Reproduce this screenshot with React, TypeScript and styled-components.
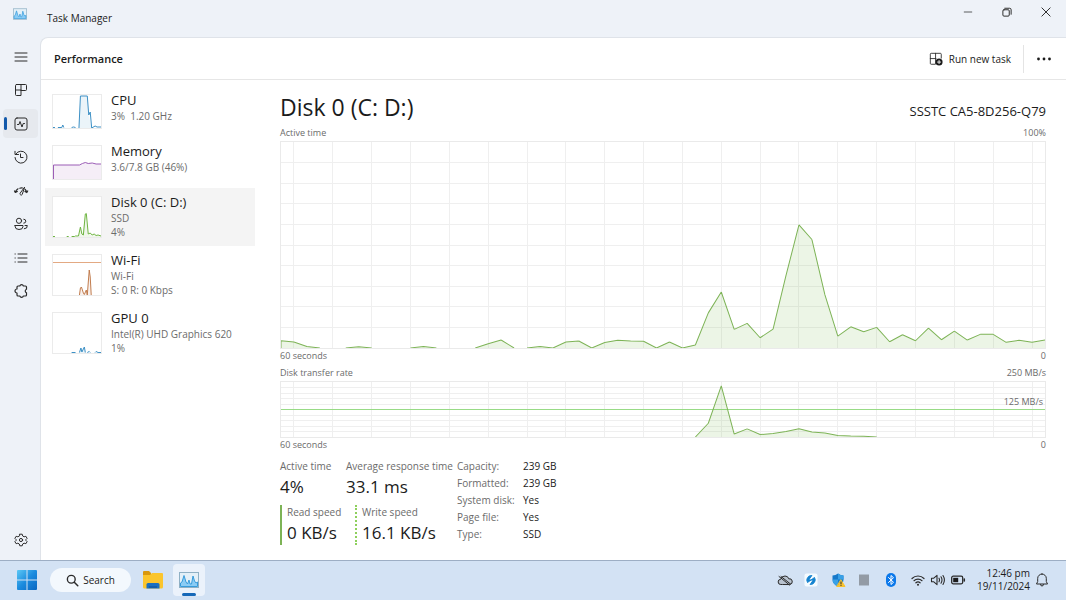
import React from "react";
import styled, { createGlobalStyle } from "styled-components";

const GlobalStyle = createGlobalStyle`
  *, *::before, *::after { box-sizing: border-box; }
  body { margin: 0; background: #eef2f8; color: #1b1b1b; font-family: "Open Sans", "Noto Sans", sans-serif; font-size: 10px; }
  button { font: inherit; color: inherit; border: 0; background: none; padding: 0; display: flex; align-items: center; justify-content: center; }
  svg { display: block; flex: none; }
`;

const Desktop = styled.div`
  min-height: 100vh;
  display: flex;
  flex-direction: column;
`;

const TitleBar = styled.header`
  height: 37px;
  padding-right: 1px;
  display: flex;
  align-items: flex-start;
`;

const AppIcon = styled.div`
  width: 47px;
  padding: 8px 0 0 13px;
`;

const AppName = styled.span`
  flex: 1;
  padding-top: 11px;
  line-height: 14px;
`;

const WindowButton = styled.button`
  width: 39px;
  height: 24px;
`;

const Body = styled.div`
  flex: 1;
  display: flex;
`;

const Rail = styled.nav`
  width: 40px;
  padding: 5px 3px 6px;
  display: flex;
  flex-direction: column;
  justify-content: space-between;
`;

const RailGroup = styled.div`
  height: 264px;
  display: flex;
  flex-direction: column;
  justify-content: space-between;
`;

const RailButton = styled.button<{ $active?: boolean }>`
  position: relative;
  width: 35px;
  height: 29px;
  border-radius: 4px;
  background: ${(p) => (p.$active ? "#e6e9ee" : "transparent")};
  &::before {
    content: "";
    display: ${(p) => (p.$active ? "block" : "none")};
    position: absolute;
    left: 1px;
    top: 8px;
    width: 3px;
    height: 13px;
    border-radius: 2px;
    background: #1259ab;
  }
`;

const Panel = styled.main`
  flex: 1;
  min-width: 0;
  background: #fff;
  border: 1px solid #dfe3e9;
  border-width: 1px 0 0 1px;
  border-top-left-radius: 8px;
  display: flex;
  flex-direction: column;
`;

const Toolbar = styled.div`
  height: 42px;
  padding-left: 13px;
  display: flex;
  align-items: center;
  border-bottom: 1px solid #e6e6e6;
`;

const PageTitle = styled.h1`
  margin: 0;
  flex: 1;
  font-size: 11px;
  line-height: 16px;
  font-weight: 600;
`;

const RunTask = styled.button`
  gap: 6px;
  padding-right: 12px;
`;

const MoreButton = styled.button`
  width: 43px;
  height: 28px;
  padding-right: 2px;
  border-left: 1px solid #e4e4e4;
`;

const Columns = styled.div`
  flex: 1;
  display: flex;
`;

const DeviceList = styled.div`
  width: 214px;
  flex: none;
  padding: 6px 0 0 4px;
`;

const DeviceRow = styled.button<{ $selected?: boolean }>`
  width: 100%;
  min-height: 51px;
  padding: 6px 7px 7px;
  align-items: flex-start;
  justify-content: flex-start;
  gap: 9px;
  text-align: left;
  background: ${(p) => (p.$selected ? "#f4f4f4" : "transparent")};
`;

const Thumb = styled.svg<{ $short?: boolean }>`
  width: 50px;
  height: ${(p) => (p.$short ? 35 : 42)}px;
  margin-top: 2px;
  background: #fff;
  border: 1px solid #ebebeb;
`;

const DeviceText = styled.span`
  display: flex;
  flex-direction: column;
`;

const DeviceName = styled.span`
  font-size: 13px;
  line-height: 17px;
`;

const DeviceInfo = styled.span`
  line-height: 14px;
  color: #6b6b6b;
  white-space: pre;
`;

const Detail = styled.section`
  flex: 1;
  min-width: 0;
  padding: 12px 20px 8px 25px;
`;

const DetailHead = styled.div`
  display: flex;
  justify-content: space-between;
  align-items: baseline;
  margin-bottom: 4px;
`;

const DeviceTitle = styled.h2`
  margin: 0;
  font-size: 23px;
  line-height: 30px;
  font-weight: 400;
`;

const Model = styled.span`
  font-size: 13px;
  line-height: 20px;
`;

const Caption = styled.div<{ $gap?: number }>`
  display: flex;
  justify-content: space-between;
  font-size: 9px;
  line-height: 14px;
  color: #6b6b6b;
  margin-bottom: ${(p) => p.$gap ?? 0}px;
`;

const Chart = styled.div`
  position: relative;
`;

const Plot = styled.svg<{ $height: number }>`
  width: 100%;
  height: ${(p) => p.$height}px;
  border: 1px solid #eaeaea;
`;

const MidLabel = styled.span`
  position: absolute;
  right: 3px;
  top: 14px;
  font-size: 9px;
  line-height: 14px;
  color: #6b6b6b;
`;

const Stats = styled.div`
  display: flex;
  margin-top: 7px;
`;

const StatBlock = styled.div`
  width: 177px;
  display: flex;
  flex-direction: column;
  gap: 6px;
`;

const StatRow = styled.div`
  display: flex;
`;

const Stat = styled.div<{ $width: number; $bar?: "solid" | "dotted" }>`
  width: ${(p) => p.$width}px;
  padding-left: ${(p) => (p.$bar ? 5 : 0)}px;
  border-left: ${(p) => (p.$bar ? `2px ${p.$bar} ${p.$bar === "solid" ? "#7db356" : "#8ed05c"}` : "0")};
  white-space: nowrap;
`;

const StatLabel = styled.div`
  line-height: 14px;
  margin-bottom: 2px;
  color: #6b6b6b;
`;

const StatValue = styled.div`
  font-size: 17px;
  line-height: 24px;
`;

const Facts = styled.table`
  border-collapse: collapse;
  align-self: flex-start;
  th, td { padding: 0; height: 17px; line-height: 14px; font-weight: 400; text-align: left; vertical-align: top; }
  th { width: 66px; color: #6b6b6b; }
`;

const Taskbar = styled.footer`
  height: 40px;
  padding: 0 16px 1px 17px;
  display: flex;
  align-items: center;
  background: #d3e2f4;
  border-top: 1px solid #9daec4;
`;

const StartButton = styled.button`
  margin-right: 13px;
`;

const SearchButton = styled.button`
  width: 81px;
  height: 24px;
  border-radius: 12px;
  gap: 4px;
  background: #f3f8fd;
  margin-right: 12px;
`;

const OpenApp = styled.button`
  position: relative;
  width: 32px;
  height: 32px;
  margin-left: 10px;
  border-radius: 4px;
  background: #ebf2fb;
  &::after {
    content: "";
    position: absolute;
    bottom: 0;
    left: 9px;
    width: 14px;
    height: 3px;
    border-radius: 2px;
    background: #1668b8;
  }
`;

const Tray = styled.div`
  margin-left: auto;
  display: flex;
  align-items: center;
`;

const TrayGroup = styled.div<{ $width: number }>`
  width: ${(p) => p.$width}px;
  display: flex;
  justify-content: space-between;
  margin-right: 11px;
`;

const Clock = styled.div`
  text-align: right;
  line-height: 13px;
  margin-right: 4px;
`;

const STEPS = 59;

const activeTime = [
  7.3, 6, 1.5, 0, 0, 0, 1.3, 0, 0, 0, 0, 1.6, 0, 0, 0, 0, 4.3, 8, 0, 0, 1.5, 0, 6, 7, 0, 5.5, 7.7, 7, 6.8, 0,
  6, 0, 3, 35.3, 56.3, 18.7, 24.7, 10.3, 19, 73, 123.7, 109, 53.7, 12, 21.3, 16.3, 20.7, 6.3, 13.3, 7.3, 20,
  8.3, 17, 8, 13.7, 13.7, 5.7, 7.7, 5.7, 8,
];

const transferRate = [
  ...Array(33).fill(0), 14, 52, 3, 8.3, 2.5, 3.5, 5.5, 8.3, 5, 4, 1.6, 1, 0.8, ...Array(14).fill(0),
];

function toPoints(values: number[], height: number) {
  return values.map((v, i) => `${i},${height - v}`);
}

function HistoryPlot({ values, height, label, middle }: { values: number[]; height: number; label: string; middle?: boolean }) {
  const points = toPoints(values, height);
  const columns = Array.from({ length: 20 }, (_, i) => 1 + i * 3);
  const rows = Array.from({ length: 9 }, (_, i) => ((i + 1) * height) / 10);
  const line: string[] = [];
  for (let i = 0; i < values.length - 1; i++) {
    if (values[i] > 0 || values[i + 1] > 0) line.push(`M${points[i]}L${points[i + 1]}`);
  }
  if (values[0] > 0) line.unshift(`M0,${height}L${points[0]}`);
  return (
    <Plot $height={height + 1} viewBox={`0 0 ${STEPS} ${height}`} preserveAspectRatio="none" role="img" aria-label={label}>
      <g stroke="#efefef" shapeRendering="crispEdges">
        {columns.map((x) => <line key={x} x1={x} x2={x} y1="0" y2={height} vectorEffect="non-scaling-stroke" />)}
        {rows.map((y) => <line key={y} x1="0" x2={STEPS} y1={y} y2={y} vectorEffect="non-scaling-stroke" />)}
      </g>
      {middle && <line x1="0" x2={STEPS} y1={height / 2} y2={height / 2} stroke="#98db86" shapeRendering="crispEdges" vectorEffect="non-scaling-stroke" />}
      <polygon points={`0,${height} ${points.join(" ")} ${STEPS},${height}`} fill="#6fb03f" fillOpacity="0.13" />
      <path d={line.join("")} fill="none" stroke="#7db356" vectorEffect="non-scaling-stroke" />
    </Plot>
  );
}

const devices = [
  { name: "CPU", info: ["3%  1.20 GHz"], short: true, color: "#3b8fc4", d: "M0 32.5H2M5 32.5H9L10 30L11 32.5M19 32.5L21 32L23 32.5M26.5 33L28 1H35L36.5 20L38 17L39.5 33L43 31L45 32L49 32", fill: "M26.5 33L28 1H35L36.5 20L39.5 33Z" },
  { name: "Memory", info: ["3.6/7.8 GB (46%)"], short: true, color: "#9a5bb5", d: "M.5 33V19H27L30 17.500L33 16.500L36 17.500L40 17L44 18H49", fill: "M0 33V19H27L33 16.500L44 18H49V33Z" },
  { name: "Disk 0 (C: D:)", info: ["SSD", "4%"], selected: true, color: "#6cb33f", d: "M0 39.500H2M14 39.500H16M19 39.500H22L23 39H26L28 30L29.500 37L31 38L33 17L34 16.500L36 37L38 36L40 38L42 37L44 38.500L46 38L49 39", fill: "M26 40L28 30L30 38L33 17L36 37L49 39V40Z" },
  { name: "Wi-Fi", info: ["Wi-Fi", "S: 0 R: 0 Kbps"], color: "#c07a4c", rule: true, d: "M27 40L28 33L29 32L31 38L32 39.500L34 35L35 40L37 15L38 22L39 40", fill: "M27 40L28 33L31 38L32 40L34 35L35 40L37 15L39 40Z" },
  { name: "GPU 0", info: ["Intel(R) UHD Graphics 620", "1%"], color: "#3b8fc4", d: "M19 39.500H23M27 39.500L28.500 35L29.500 39L31 36L32 34L33 39.500M35 39.500L37 38.500L38 39.500M43 39.500L44 38.500L46 39.500H49", fill: "M27 40L28.500 35L31 36L32 34L33 40Z" },
];

const facts = [
  ["Capacity:", "239 GB"],
  ["Formatted:", "239 GB"],
  ["System disk:", "Yes"],
  ["Page file:", "Yes"],
  ["Type:", "SSD"],
];

function Icon({ children, size = 16 }: { children: React.ReactNode; size?: number }) {
  return (
    <svg width={size} height={size} viewBox="0 0 16 16" fill="none" stroke="#2b2b2b" strokeLinecap="round" strokeLinejoin="round" aria-hidden="true">
      {children}
    </svg>
  );
}

function GraphIcon({ width, height }: { width: number; height: number }) {
  return (
    <svg width={width} height={height} viewBox="0 0 20 16" aria-hidden="true">
      <rect x=".5" y=".5" width="19" height="15" fill="#e3f0f8" stroke="#8fb0c4" />
      <path d="M1.500 14.500V11L3 10L5 3.500L7 10L8.500 12L10 8L11 12H12.500L14 4L15.500 9L17 11L18.500 10V14.500Z" fill="#8accf5" stroke="#379bdb" />
    </svg>
  );
}

const railIcons = [
  { label: "Menu", icon: <path d="M2 4H14M2 8H14M2 12H14" /> },
  { label: "Processes", icon: <path d="M3.500 2.500H8V13.500H3.500Q2.500 13.500 2.500 12.500V3.500Q2.500 2.500 3.500 2.500ZM2.500 8H8M8 2.500H12.500Q13.500 2.500 13.500 3.500V7.500Q13.500 8.500 12.500 8.500H8" /> },
  { label: "Performance", active: true, icon: <><rect x="2" y="2" width="12" height="12" rx="2" /><path d="M4.500 8.500H6L7 5.500L9 11L10.200 7.500H11.500" /></> },
  { label: "App history", icon: <><path d="M3 4.800A6 6 0 1 1 2 8.500M2 2.300V5.500H5.500" /><path d="M7.500 5V8.500H10" /></> },
  { label: "Startup apps", icon: <><path d="M2.300 9.500A6 6 0 0 1 5 5.800M6.800 5.200A5 5 0 0 1 9.500 5M12.200 6.500A6 6 0 0 1 13.800 9.500M1.500 8L2.300 9.500L4.300 8.500M14.700 8L13.800 9.500L12 8.500" strokeWidth="1.200" /><path d="M11.500 4.500L9.200 11.500A1.200 1.200 0 0 1 7 10.700Z" /></> },
  { label: "Users", icon: <><circle cx="6" cy="4.800" r="2.600" /><path d="M2 9.500H10V10.500Q10 13.500 6 13.500T2 10.500Z" /><path d="M10.800 3.200A2 2 0 1 1 10.800 7.200M12 9.500H14.300Q14.600 12.800 11.300 12.800" /></> },
  { label: "Details", icon: <path d="M5 4H14M5 8H14M5 12H14M2 4H2.300M2 8H2.300M2 12H2.300" /> },
  { label: "Services", icon: <path d="M5 3H6.800A1.900 1.900 0 0 1 10.400 3H12.500Q13.500 3 13.500 4V6.200A1.900 1.900 0 0 0 13.500 9.800V12Q13.500 13 12.500 13H10.400A1.900 1.900 0 0 1 6.800 13H5Q4 13 4 12V10A2 2 0 0 1 4 6V4Q4 3 5 3Z" strokeWidth="1.200" /> },
];

export default function App() {
  return (
    <Desktop>
      <GlobalStyle />
      <TitleBar>
        <AppIcon><GraphIcon width={14} height={12} /></AppIcon>
        <AppName>Task Manager</AppName>
        <WindowButton aria-label="Minimize"><Icon size={12}><path d="M3 8H13" /></Icon></WindowButton>
        <WindowButton aria-label="Restore"><Icon size={12}><rect x="2.500" y="5" width="8.500" height="8.500" rx="1.500" strokeWidth="1.300" /><path d="M5 3H11.500Q13.500 3 13.500 5V11" strokeWidth="1.300" /></Icon></WindowButton>
        <WindowButton aria-label="Close"><Icon size={12}><path d="M2.500 2.500L13.500 13.500M13.500 2.500L2.500 13.500" strokeWidth="1.300" /></Icon></WindowButton>
      </TitleBar>
      <Body>
        <Rail>
          <RailGroup>
            {railIcons.map((r) => (
              <RailButton key={r.label} aria-label={r.label} $active={r.active}><Icon>{r.icon}</Icon></RailButton>
            ))}
          </RailGroup>
          <RailButton aria-label="Settings">
            <Icon>
              <path d="M6.800 2.200H9.200L9.700 4L11.100 4.800L12.900 4.300L14.100 6.400L12.800 7.700V8.300L14.100 9.600L12.900 11.700L11.100 11.200L9.700 12L9.200 13.800H6.800L6.300 12L4.900 11.200L3.100 11.700L1.900 9.600L3.200 8.300V7.700L1.900 6.400L3.100 4.300L4.900 4.800L6.300 4Z" />
              <circle cx="8" cy="8" r="1.600" />
            </Icon>
          </RailButton>
        </Rail>
        <Panel>
          <Toolbar>
            <PageTitle>Performance</PageTitle>
            <RunTask>
              <Icon size={14}>
                <path d="M7 14H2.500Q1.500 14 1.500 13V2.500Q1.500 1.500 2.500 1.500H13Q14 1.500 14 2.500V7M1.500 7.500H8M7.500 1.500V13.500" />
                <circle cx="11.500" cy="11.500" r="4" fill="#1b1b1b" stroke="none" />
                <path d="M11.500 9.700V13.300M9.700 11.500H13.300" stroke="#fff" />
              </Icon>
              Run new task
            </RunTask>
            <MoreButton aria-label="More options">
              <Icon><g fill="#1b1b1b" stroke="none"><circle cx="2.500" cy="8" r="1.400" /><circle cx="8" cy="8" r="1.400" /><circle cx="13.500" cy="8" r="1.400" /></g></Icon>
            </MoreButton>
          </Toolbar>
          <Columns>
            <DeviceList>
              {devices.map((d) => (
                <DeviceRow key={d.name} $selected={d.selected}>
                  <Thumb $short={d.short} viewBox={d.short ? "0 0 49 33" : "0 0 49 40"} preserveAspectRatio="none" aria-hidden="true">
                    <path d={d.fill} fill={d.color} fillOpacity="0.1" />
                    {d.rule && <path d="M0 7.500H49" stroke="#e3a882" />}
                    <path d={d.d} fill="none" stroke={d.color} />
                  </Thumb>
                  <DeviceText>
                    <DeviceName>{d.name}</DeviceName>
                    {d.info.map((line) => <DeviceInfo key={line}>{line}</DeviceInfo>)}
                  </DeviceText>
                </DeviceRow>
              ))}
            </DeviceList>
            <Detail>
              <DetailHead>
                <DeviceTitle>Disk 0 (C: D:)</DeviceTitle>
                <Model>SSSTC CA5-8D256-Q79</Model>
              </DetailHead>
              <Caption $gap={1}><span>Active time</span><span>100%</span></Caption>
              <HistoryPlot values={activeTime} height={207} label="Active time" />
              <Caption $gap={3}><span>60 seconds</span><span>0</span></Caption>
              <Caption $gap={1}><span>Disk transfer rate</span><span>250 MB/s</span></Caption>
              <Chart>
                <HistoryPlot values={transferRate} height={56} label="Disk transfer rate" middle />
                <MidLabel>125 MB/s</MidLabel>
              </Chart>
              <Caption><span>60 seconds</span><span>0</span></Caption>
              <Stats>
                <StatBlock>
                  <StatRow>
                    <Stat $width={66}><StatLabel>Active time</StatLabel><StatValue>4%</StatValue></Stat>
                    <Stat $width={111}><StatLabel>Average response time</StatLabel><StatValue>33.1 ms</StatValue></Stat>
                  </StatRow>
                  <StatRow>
                    <Stat $width={75} $bar="solid"><StatLabel>Read speed</StatLabel><StatValue>0 KB/s</StatValue></Stat>
                    <Stat $width={102} $bar="dotted"><StatLabel>Write speed</StatLabel><StatValue>16.1 KB/s</StatValue></Stat>
                  </StatRow>
                </StatBlock>
                <Facts>
                  <tbody>
                    {facts.map(([k, v]) => <tr key={k}><th scope="row">{k}</th><td>{v}</td></tr>)}
                  </tbody>
                </Facts>
              </Stats>
            </Detail>
          </Columns>
        </Panel>
      </Body>
      <Taskbar>
        <StartButton aria-label="Start">
          <svg width="20" height="20" viewBox="0 0 20 20" aria-hidden="true">
            <defs><linearGradient id="start" x1="0" y1="0" x2="20" y2="20" gradientUnits="userSpaceOnUse"><stop stopColor="#5cc8f5" /><stop offset=".5" stopColor="#1b8bde" /><stop offset="1" stopColor="#0a66c0" /></linearGradient></defs>
            <path d="M0 1Q0 0 1 0H9.500V9.500H0ZM10.500 0H19Q20 0 20 1V9.500H10.500ZM0 10.500H9.500V20H1Q0 20 0 19ZM10.500 10.500H20V19Q20 20 19 20H10.500Z" fill="url(#start)" />
          </svg>
        </StartButton>
        <SearchButton>
          <Icon size={13}><circle cx="6.500" cy="6.500" r="4.800" strokeWidth="1.700" /><path d="M10.200 10.200L14.500 14.500" strokeWidth="1.900" /></Icon>
          Search
        </SearchButton>
        <button aria-label="File Explorer">
          <svg width="20" height="20" viewBox="0 0 20 20" aria-hidden="true">
            <path d="M0 2Q0 1 1 1H6L8 3V7H0Z" fill="#d9980f" />
            <path d="M0 5H7L9 3H19Q20 3 20 4V17Q20 18.500 18.500 18.500H1.500Q0 18.500 0 17Z" fill="#fbc52d" />
            <path d="M3.500 18.500V14.500Q3.500 13 5 13H15Q16.500 13 16.500 14.500V18.500Z" fill="#1a6fc0" />
            <path d="M6 17H14" stroke="#0f4f94" />
          </svg>
        </button>
        <OpenApp aria-label="Task Manager"><GraphIcon width={20} height={16} /></OpenApp>
        <Tray>
          <TrayGroup $width={122}>
            <Icon>
              <path d="M5 12.500H3.800A2.600 2.600 0 0 1 3.700 7.300Q4.500 4 8 4Q11 4 11.800 6.800A2.800 2.800 0 0 1 13 12.500Z" fill="#b9c3cf" /><path d="M2 4.500L12.500 13M4 4.500L13.500 12" />
            </Icon>
            <Icon>
              <rect x="1.500" y="1.500" width="13" height="13" rx="2" fill="#f5fbff" stroke="none" />
              <path d="M8.500 3.500A4.600 4.600 0 0 0 4.500 10.500L8 8H6ZM7.500 12.500A4.600 4.600 0 0 0 11.500 5.500L8 8H10Z" fill="#1583cf" stroke="#1583cf" />
            </Icon>
            <Icon>
              <path d="M8 1.500Q10.500 3.500 13.500 3.500V7.500Q13.500 12 8 14.500Q2.500 12 2.500 7.500V3.500Q5.500 3.500 8 1.500Z" fill="#1679ca" stroke="none" />
              <path d="M8 1.500Q10.500 3.500 13.500 3.500V7.500H8ZM8 7.500V14.500Q2.500 12 2.500 7.500Z" fill="#39a0e6" stroke="none" />
              <path d="M11 8L15 14.500H7Z" fill="#f9c22e" stroke="#f9c22e" /><path d="M11 10V12M11 13.500V13.600" />
            </Icon>
            <Icon><rect x="3" y="2.500" width="10" height="11" fill="#939ba5" stroke="none" /></Icon>
            <Icon>
              <rect x="3" y="1" width="10" height="14" rx="5" fill="#0b78ea" stroke="none" />
              <path d="M5.500 5.500L10.500 10.300L8 12.500V3.500L10.500 5.700L5.500 10.500" stroke="#fff" />
            </Icon>
          </TrayGroup>
          <TrayGroup $width={56}>
            <Icon><path d="M2 6.500A8.500 8.500 0 0 1 14 6.500M4 8.700A5.700 5.700 0 0 1 12 8.700M5.900 10.800A3 3 0 0 1 10.100 10.800" strokeWidth="1.200" /><circle cx="8" cy="12.700" r="1" fill="#2b2b2b" stroke="none" /></Icon>
            <Icon><path d="M1.500 6.300H3.500L7 3.300V12.700L3.500 9.700H1.500ZM9 6.200Q10 8 9 9.800M11 4.800Q13 8 11 11.200M13 3.500Q15.800 8 13 12.500" strokeWidth="1.100" /></Icon>
            <Icon><rect x="1.700" y="4.200" width="11" height="7.600" rx="1.500" strokeWidth="1.300" /><rect x="3.200" y="5.800" width="5" height="4.400" fill="#1b1b1b" stroke="none" /><path d="M14.300 7V9" strokeWidth="1.500" /></Icon>
          </TrayGroup>
          <Clock><div>12:46 pm</div><div>19/11/2024</div></Clock>
          <button aria-label="Notifications">
            <Icon><path d="M8 2A4.300 4.300 0 0 0 3.700 6.300V9.500L2.500 12H13.500L12.300 9.500V6.300A4.300 4.300 0 0 0 8 2ZM6.500 12.500A1.500 1.500 0 0 0 9.500 12.500" /></Icon>
          </button>
        </Tray>
      </Taskbar>
    </Desktop>
  );
}
